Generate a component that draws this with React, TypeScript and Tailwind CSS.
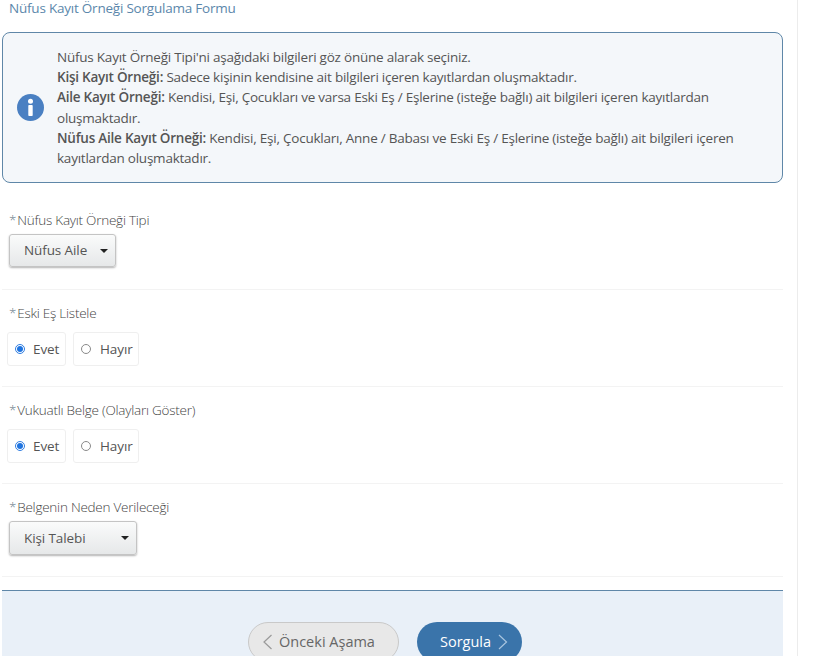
import React from "react";

const font = { fontFamily: '"Open Sans", sans-serif' };

function Label({ text }: { text: string }) {
  return (
    <div className="h-[20px] pl-[7px] text-[13.5px] font-light leading-[20px] tracking-[-0.24px] text-[#444]">
      <span className="mr-[1px] text-[#6f7f8f]">*</span>
      {text}
    </div>
  );
}

function Select({ text, width, height }: { text: string; width: string; height: string }) {
  return (
    <div
      className={`ml-[7px] flex items-center justify-between rounded-[3px] border border-[#c4c4c4] bg-gradient-to-b from-[#fafbfb] to-[#e6e8e9] pl-[14px] pr-[7px] text-[13.5px] tracking-[-0.1px] text-[#555] shadow-[0_1px_2px_rgba(0,0,0,0.3)] ${width} ${height}`}
    >
      <span>{text}</span>
      <span className="h-0 w-0 border-x-[4.5px] border-t-[4.5px] border-x-transparent border-t-[#222]" />
    </div>
  );
}

function Radio({ text, checked, width }: { text: string; checked?: boolean; width: string }) {
  return (
    <div
      className={`flex h-[34px] items-center gap-[8px] rounded-[3px] border border-[#efefef] pl-[7px] text-[13.5px] tracking-[-0.1px] text-[#555] ${width}`}
    >
      {checked ? (
        <span className="flex h-[10px] w-[10px] items-center justify-center rounded-full border border-[#2f7de1]">
          <span className="h-[6px] w-[6px] rounded-full bg-[#1f74e0]" />
        </span>
      ) : (
        <span className="mr-[1px] h-[10px] w-[10px] rounded-full border border-[#8a8a8a] bg-white" />
      )}
      <span>{text}</span>
    </div>
  );
}

function RadioRow() {
  return (
    <div className="ml-[5px] mt-[9px] flex gap-[7px]">
      <Radio text="Evet" checked width="w-[59px]" />
      <Radio text="Hayır" width="w-[66px]" />
    </div>
  );
}

export default function App() {
  return (
    <div className="h-[656px] w-[813px] overflow-hidden bg-white" style={font}>
      <div className="h-[656px] w-[798px] border-r border-[#ececec] pl-[2px] pr-[14px]">
        <div className="h-[32px] pl-[7px] text-[13.5px] leading-[17px] tracking-[-0.22px] text-[#5b87ab]">
          Nüfus Kayıt Örneği Sorgulama Formu
        </div>

        <div className="flex h-[151px] items-center rounded-[8px] border border-[#5f87a8] bg-[#f4f7fa] pl-[14px] pr-[30px]">
          <svg width="27" height="27" viewBox="0 0 27 27" className="shrink-0">
            <circle cx="13.5" cy="13.5" r="13.5" fill="#4a80c2" />
            <circle cx="13.5" cy="7.2" r="2.5" fill="#fff" />
            <rect x="11.3" y="11" width="4.4" height="11" rx="0.8" fill="#fff" />
          </svg>
          <div className="ml-[13px] text-[13.5px] leading-[20.25px] tracking-[-0.23px] text-[#555]">
            Nüfus Kayıt Örneği Tipi'ni aşağıdaki bilgileri göz önüne alarak seçiniz.
            <br />
            <b className="font-semibold">Kişi Kayıt Örneği:</b> Sadece kişinin kendisine ait bilgileri içeren kayıtlardan oluşmaktadır.
            <br />
            <b className="font-semibold">Aile Kayıt Örneği:</b> Kendisi, Eşi, Çocukları ve varsa Eski Eş / Eşlerine (isteğe bağlı) ait bilgileri içeren kayıtlardan oluşmaktadır.
            <br />
            <b className="font-semibold">Nüfus Aile Kayıt Örneği:</b> Kendisi, Eşi, Çocukları, Anne / Babası ve Eski Eş / Eşlerine (isteğe bağlı) ait bilgileri içeren kayıtlardan oluşmaktadır.
          </div>
        </div>

        <div className="h-[107px] border-b border-[#f3f3f3] pt-[27px]">
          <Label text="Nüfus Kayıt Örneği Tipi" />
          <div className="pt-[4px]">
            <Select text="Nüfus Aile" width="w-[107px]" height="h-[33px]" />
          </div>
        </div>
        <div className="h-[97px] border-b border-[#f3f3f3] pt-[13px]">
          <Label text="Eski Eş Listele" />
          <RadioRow />
        </div>
        <div className="h-[97px] border-b border-[#f3f3f3] pt-[13px]">
          <Label text="Vukuatlı Belge (Olayları Göster)" />
          <RadioRow />
        </div>
        <div className="h-[93px] border-b border-[#f3f3f3] pt-[13px]">
          <Label text="Belgenin Neden Verileceği" />
          <div className="pt-[4px]">
            <Select text="Kişi Talebi" width="w-[128px]" height="h-[34px]" />
          </div>
        </div>

        <div className="mt-[13px] flex h-[80px] justify-center gap-[18px] border-t border-[#5f87a8] bg-[#e9f0f8] pr-[15px] pt-[31px]">
          <div className="flex h-[40px] w-[151px] items-center gap-[7px] rounded-[21px] border border-[#c9c9c9] bg-[#e8e8e8] pl-[13px] text-[14.5px] text-[#666]">
            <svg width="10" height="16" viewBox="0 0 10 16" fill="none" stroke="#9a9a9a" strokeWidth="1.2">
              <path d="M9.5 1 2 8l7.5 7" />
            </svg>
            <span>Önceki Aşama</span>
          </div>
          <div className="flex h-[40px] w-[105px] items-center gap-[7px] rounded-[21px] bg-[#3a74aa] pl-[23px] text-[14.5px] text-white">
            <span className="font-medium">Sorgula</span>
            <svg width="10" height="16" viewBox="0 0 10 16" fill="none" stroke="#a9c5df" strokeWidth="1.2">
              <path d="M1 1l7.5 7L1 15" />
            </svg>
          </div>
        </div>
      </div>
    </div>
  );
}
